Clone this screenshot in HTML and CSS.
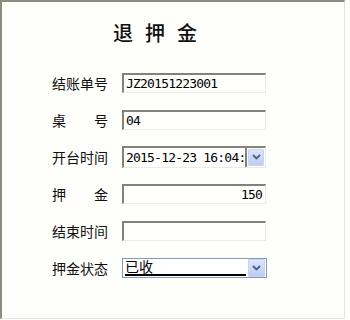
FILE: index.html
```html
<!DOCTYPE html>
<html>
<head>
<meta charset="utf-8">
<link rel="stylesheet" href="styles.css">
</head>
<body>
<div class="window">
  <h1 class="title">退押金</h1>
  <div class="form">
    <div class="row">
      <span class="label">结账单号</span>
      <div class="field">JZ20151223001</div>
    </div>
    <div class="row">
      <span class="label spread"><span>桌</span><span>号</span></span>
      <div class="field">04</div>
    </div>
    <div class="row">
      <span class="label">开台时间</span>
      <div class="field datetime">
        <span class="dt-text">2015-12-23 16:04:</span>
        <span class="dt-btn"><span class="blue-btn"><svg width="9" height="6" viewBox="0 0 9 6"><path d="M1 1 L4.5 4.5 L8 1" fill="none" stroke="#4d6185" stroke-width="1.8"/></svg></span></span>
      </div>
    </div>
    <div class="row">
      <span class="label spread"><span>押</span><span>金</span></span>
      <div class="field num">150</div>
    </div>
    <div class="row">
      <span class="label">结束时间</span>
      <div class="field"></div>
    </div>
    <div class="row">
      <span class="label">押金状态</span>
      <div class="select">
        <span class="sel-text">已收</span>
        <span class="blue-btn sel-btn"><svg width="9" height="6" viewBox="0 0 9 6"><path d="M1 1 L4.5 4.5 L8 1" fill="none" stroke="#4d6185" stroke-width="1.8"/></svg></span>
      </div>
    </div>
  </div>
</div>
</body>
</html>
```

FILE: styles.css
```css
html, body {
  margin: 0;
  padding: 0;
  background: #fefefa;
}
body {
  width: 350px;
  height: 320px;
  overflow: hidden;
}
.window {
  box-sizing: border-box;
  width: 345px;
  height: 319px;
  border-top: 2px solid #8e8c80;
  border-left: 2px solid #8e8c80;
  border-right: 1px solid #e6e4da;
  border-bottom: 1px solid #e6e4da;
  background: #fefefa;
  font-family: "Noto Sans CJK SC", "Noto Sans", sans-serif;
}
.title {
  margin: 0;
  padding-top: 19px;
  padding-left: 111px;
  height: 24px;
  line-height: 24px;
  font-size: 20px;
  font-weight: 500;
  letter-spacing: 12px;
  color: #111;
}
.form {
  margin-top: 19px;
  display: flex;
  flex-direction: column;
}
.row {
  height: 37px;
  display: flex;
  align-items: center;
  padding-left: 50px;
}
.label {
  width: 56px;
  margin-right: 14px;
  font-size: 14px;
  line-height: 18px;
  color: #111;
  white-space: nowrap;
}
.spread {
  display: flex;
  justify-content: space-between;
}
.field {
  box-sizing: border-box;
  width: 144px;
  height: 20px;
  border-top: 2px solid #83827a;
  border-left: 2px solid #83827a;
  border-right: 1px solid #eceae2;
  border-bottom: 1px solid #eceae2;
  background: #fffffd;
  font-family: "DejaVu Sans Mono", "Liberation Mono", monospace;
  font-size: 13px;
  letter-spacing: -0.8px;
  line-height: 17px;
  padding-left: 2px;
  color: #000;
  white-space: nowrap;
  overflow: hidden;
}
.num {
  text-align: right;
  padding-right: 3px;
}
.datetime {
  height: 22px;
  display: flex;
  padding-left: 0;
  line-height: 19px;
}
.dt-text {
  flex: 1;
  padding-left: 2px;
}
.dt-btn {
  width: 20px;
  border-left: 2px solid #83827a;
  display: flex;
  padding: 1px;
}
.blue-btn {
  box-sizing: border-box;
  flex: 1;
  display: flex;
  align-items: center;
  justify-content: center;
  background: linear-gradient(#dbe4fc, #bccdf5);
  border: 1px solid #c8d4f0;
  border-radius: 1px;
}
.select {
  box-sizing: border-box;
  width: 145px;
  height: 20px;
  border: 1px solid #7f9db9;
  background: #fff;
  display: flex;
  align-items: stretch;
  padding: 0 1px 0 2px;
}
.sel-text {
  flex: 1;
  font-size: 14px;
  line-height: 15px;
  color: #000;
  border-bottom: 2px solid #000;
  margin-right: 2px;
  margin-bottom: 1px;
}
.sel-btn {
  flex: none;
  width: 17px;
}
```
